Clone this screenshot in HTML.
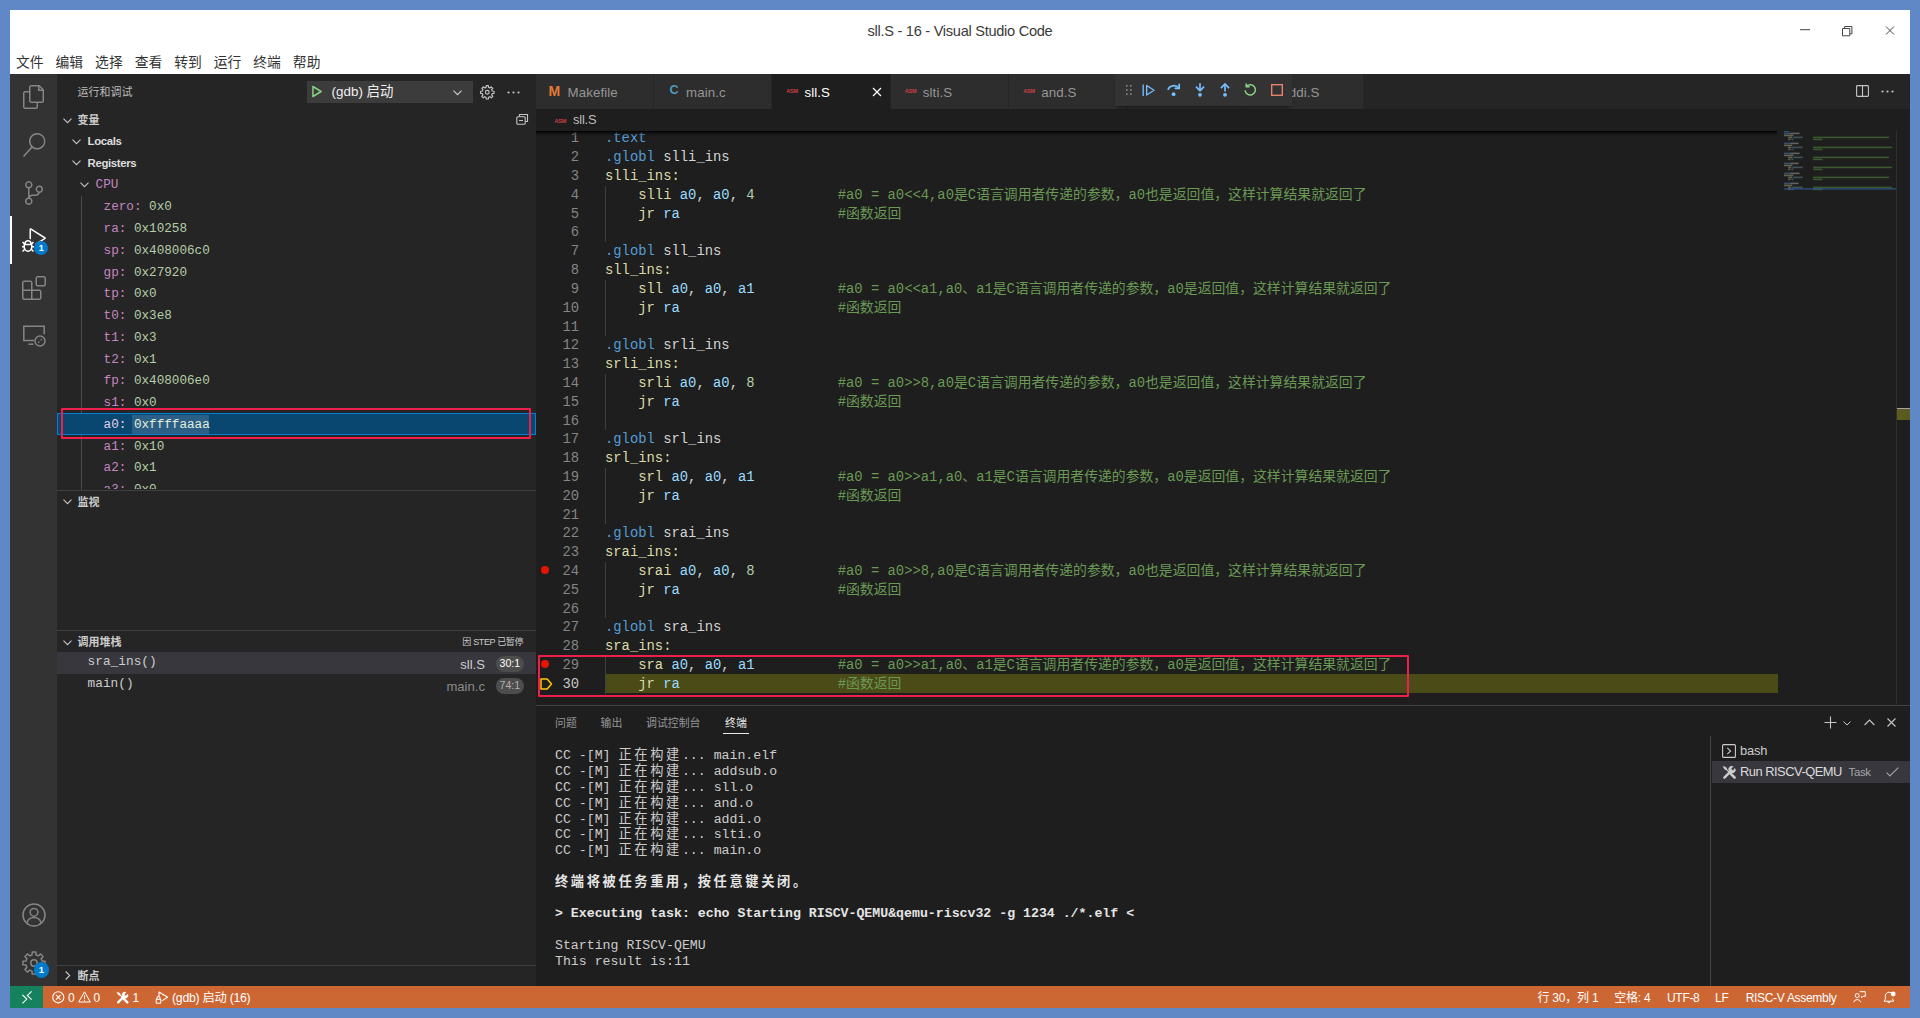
<!DOCTYPE html><html lang="zh-CN"><head><meta charset="utf-8"><title>sll.S - 16 - Visual Studio Code</title><style>
*{box-sizing:border-box;margin:0;padding:0}
html,body{width:1920px;height:1018px;overflow:hidden}
body{background:#6087c6;font-family:"Liberation Sans","Noto Sans CJK SC",sans-serif;font-size:13px;color:#ccc;position:relative}
.abs{position:absolute}
#win{position:absolute;left:10px;top:10px;width:1900px;height:998px;background:#1e1e1e;overflow:hidden}
#title{position:absolute;left:0;top:0;width:1900px;height:63.5px;background:#fff;color:#333}
#title .t{position:absolute;left:0;width:1900px;top:11.6px;text-align:center;font-size:14.6px;line-height:18px;color:#3a3a3a;letter-spacing:-0.28px}
#menu span{position:absolute;top:44.3px;font-size:13.8px;line-height:18px;color:#333;white-space:nowrap}
#act{position:absolute;left:0;top:63.5px;width:47.4px;height:912.5px;background:#333}
#side{position:absolute;left:47.4px;top:63.5px;width:478.6px;height:912.5px;background:#252526}
#ed{position:absolute;left:526px;top:63.5px;width:1374px;height:912.5px;background:#1e1e1e}
#status{position:absolute;left:0;top:976px;width:1900px;height:22px;background:#cc6633;color:#fff;font-size:12px}
.mono{font-family:"Liberation Mono","Noto Sans CJK SC",monospace}
.row{position:absolute;left:0;width:478.5px;height:21.75px;line-height:21.75px;white-space:nowrap}
.hdr{font-weight:bold;font-size:11px;color:#ccc}
.k{color:#c586c0} .v{color:#b5cea8}
.tab{position:absolute;top:0;height:34.6px;background:#2d2d2d;color:#969696;font-size:13px;line-height:34.6px;white-space:nowrap}
.tab.on{background:#1e1e1e;color:#fff}
.ln{position:absolute;left:0;width:53px;text-align:right;color:#858585;height:18.805px;line-height:18.805px;font-size:13.85px}
.cl{position:absolute;left:69px;height:18.805px;line-height:18.805px;font-size:13.85px;white-space:pre;color:#d4d4d4}
.d{color:#569cd6} .p{color:#d4d4d4} .f{color:#dcdcaa} .r{color:#9cdcfe} .n{color:#b5cea8} .c{color:#6a9955}
.tl{position:absolute;left:29px;height:15.83px;line-height:15.83px;font-size:13.22px;white-space:pre;color:#ccc}
.w{letter-spacing:2.64px}
svg{position:absolute;overflow:visible}
</style></head><body>
<div id="win">
<div id="title"><div class="t">sll.S - 16 - Visual Studio Code</div>
<div id="menu">
<span style="left:6.00px">文件</span>
<span style="left:45.55px">编辑</span>
<span style="left:85.10px">选择</span>
<span style="left:124.65px">查看</span>
<span style="left:164.20px">转到</span>
<span style="left:203.75px">运行</span>
<span style="left:243.30px">终端</span>
<span style="left:282.85px">帮助</span>
</div>
<svg style="left:1789.4px;top:13.5px" width="100" height="14" viewBox="0 0 100 14" fill="none" stroke="#444" stroke-width="1"><path d="M1 5.7h10"/><path d="M43.5 4.5h7.3v7.3h-7.3z"/><path d="M45.6 4.5v-2h7.3v7.3h-2.1"/><path d="M87 2.5l8 8M95 2.5l-8 8"/></svg>
</div>
<div id="act">
<div class="abs" style="left:0;top:142.5px;width:2px;height:47.5px;background:#fff"></div>
<svg style="left:12px;top:11.5px" width="24" height="24" viewBox="0 0 24 24" fill="#858585"><path d="M17.5 0h-9L7 1.5V6H2.5L1 7.5v15.07L2.5 24h12.07L16 22.57V18h4.7l1.3-1.43V4.5L17.5 0zm0 2.12l2.38 2.38H17.5V2.12zm-3 20.38h-12v-15H7v9.07L8.5 18h6v4.5zm6-6h-12v-15H16V6h4.5v10.5z"/></svg>
<svg style="left:12px;top:59.5px" width="24" height="24" viewBox="0 0 24 24" fill="#858585"><path d="M15.25 0a8.25 8.25 0 0 0-6.18 13.72L1 22.88l1.12 1.12 8.05-9.12A8.251 8.251 0 1 0 15.25.01V0zm0 15a6.75 6.75 0 1 1 0-13.5 6.75 6.75 0 0 1 0 13.5z"/></svg>
<svg style="left:12px;top:107.0px" width="24" height="24" viewBox="0 0 24 24" fill="#858585"><path d="M21.007 8.222A3.738 3.738 0 0 0 15.045 5.2a3.737 3.737 0 0 0 1.156 6.583 2.988 2.988 0 0 1-2.668 1.67h-2.99a4.456 4.456 0 0 0-2.989 1.165V7.4a3.737 3.737 0 1 0-1.494 0v9.117a3.776 3.776 0 1 0 1.816.099 2.99 2.99 0 0 1 2.668-1.667h2.99a4.484 4.484 0 0 0 4.223-3.039 3.736 3.736 0 0 0 3.25-3.687zM4.565 3.738a2.242 2.242 0 1 1 4.484 0 2.242 2.242 0 0 1-4.484 0zm4.484 16.441a2.242 2.242 0 1 1-4.484 0 2.242 2.242 0 0 1 4.484 0zm8.221-9.715a2.242 2.242 0 1 1 0-4.485 2.242 2.242 0 0 1 0 4.485z"/></svg>
<svg style="left:12px;top:154.8px" width="24" height="24" viewBox="0 0 24 24" fill="#fff"><path d="M10.94 13.5l-1.32 1.32a3.73 3.73 0 0 0-7.24 0L1.06 13.5 0 14.56l1.72 1.72-.22.22V18H0v1.5h1.5v.08c.077.489.214.966.41 1.42L0 22.94 1.06 24l1.65-1.65A4.308 4.308 0 0 0 6 24a4.31 4.31 0 0 0 3.29-1.65L10.94 24 12 22.94 10.09 21c.198-.464.336-.951.41-1.45v-.1H12V18h-1.5v-1.5l-.22-.22L12 14.56l-1.06-1.06zM6 13.5a2.25 2.25 0 0 1 2.25 2.25h-4.5A2.25 2.25 0 0 1 6 13.5zm3 6a3.33 3.33 0 0 1-3 3 3.33 3.33 0 0 1-3-3v-2.25h6v2.25zm14.76-9.9v1.26L13.5 17.37V15.6l8.5-5.37L9 2v9.46a5.07 5.07 0 0 0-1.5-.72V.63L8.64 0l15.12 9.6z"/></svg>
<svg style="left:12px;top:202.5px" width="24" height="24" viewBox="0 0 24 24" fill="#858585"><path d="M13.5 1.5L15 0h7.5L24 1.5V9l-1.5 1.5H15L13.5 9V1.5zm1.5 0V9h7.5V1.5H15zM0 15V6l1.5-1.5H9L10.5 6v7.5H18l1.5 1.5v7.5L18 24H1.5L0 22.5V15zm9-1.5V6H1.5v7.5H9zM9 15H1.5v7.5H9V15zm1.5 7.5H18V15h-7.5v7.5z"/></svg>
<svg style="left:12px;top:249.5px" width="24" height="24" viewBox="0 0 24 24" fill="none" stroke="#858585" stroke-width="1.5"><path d="M12 17.5H1.8V3.2h20.4v8"/><path d="M6.5 21.2h5"/><circle cx="18" cy="18" r="5"/><path d="M16.2 19.8l1.3-1.3M18.6 17.4l1.3-1.3" stroke-width="1.2"/></svg>
<svg style="left:12px;top:829.5px" width="24" height="24" viewBox="0 0 24 24" fill="none" stroke="#858585" stroke-width="1.5"><circle cx="12" cy="12" r="11"/><circle cx="12" cy="9.3" r="3.9"/><path d="M4.9 20.2a7.3 7.3 0 0 1 14.2 0"/></svg>
<svg style="left:12px;top:877.2px" width="24" height="24" viewBox="0 0 24 24" fill="none" stroke="#858585" stroke-width="1.5" stroke-linejoin="round"><path d="M9.94 3.96L10.25 0.94L13.75 0.94L14.06 3.96A8.3 8.3 0 0 1 16.23 4.86L18.58 2.94L21.06 5.42L19.14 7.77A8.3 8.3 0 0 1 20.04 9.94L23.06 10.25L23.06 13.75L20.04 14.06A8.3 8.3 0 0 1 19.14 16.23L21.06 18.58L18.58 21.06L16.23 19.14A8.3 8.3 0 0 1 14.06 20.04L13.75 23.06L10.25 23.06L9.94 20.04A8.3 8.3 0 0 1 7.77 19.14L5.42 21.06L2.94 18.58L4.86 16.23A8.3 8.3 0 0 1 3.96 14.06L0.94 13.75L0.94 10.25L3.96 9.94A8.3 8.3 0 0 1 4.86 7.77L2.94 5.42L5.42 2.94L7.77 4.86A8.3 8.3 0 0 1 9.94 3.96Z"/><circle cx="12" cy="12" r="3.2"/></svg>
<div class="abs" style="left:24.3px;top:167.6px;width:14px;height:14px;border-radius:50%;background:#007acc;color:#fff;font-size:9px;font-weight:bold;line-height:14px;text-align:center">1</div>
<div class="abs" style="left:23.6px;top:888.8px;width:15.6px;height:15.6px;border-radius:50%;background:#007acc;color:#fff;font-size:9.5px;font-weight:bold;line-height:15.6px;text-align:center">1</div>
</div>
<div id="side">
<div class="abs" style="left:20.200000000000003px;top:9.5px;font-size:11px;line-height:18px;color:#bbb;white-space:nowrap">运行和调试</div>
<div class="abs" style="left:250.0px;top:7.6px;width:165.2px;height:21.8px;background:#3c3c3c"></div>
<svg style="left:255.0px;top:11.8px" width="10.4" height="13" viewBox="0 0 11 13" fill="none" stroke="#89d185" stroke-width="1.6" stroke-linejoin="round"><path d="M1 1.2l8.6 5.3L1 11.8z"/></svg>
<div class="abs" style="left:274.20000000000005px;top:8.9px;font-size:13.4px;line-height:20px;color:#f0f0f0;white-space:nowrap">(gdb) 启动</div>
<svg style="left:395.7px;top:16.2px" width="9" height="6" viewBox="0 0 9 6" fill="none" stroke="#ccc" stroke-width="1.1"><path d="M0.5 0.7l4 4 4-4"/></svg>
<svg style="left:422.80000000000007px;top:11.0px" width="14.6" height="14.6" viewBox="0 0 24 24" fill="none" stroke="#c5c5c5" stroke-width="1.9" stroke-linejoin="round"><path d="M9.94 3.96L10.25 0.94L13.75 0.94L14.06 3.96A8.3 8.3 0 0 1 16.23 4.86L18.58 2.94L21.06 5.42L19.14 7.77A8.3 8.3 0 0 1 20.04 9.94L23.06 10.25L23.06 13.75L20.04 14.06A8.3 8.3 0 0 1 19.14 16.23L21.06 18.58L18.58 21.06L16.23 19.14A8.3 8.3 0 0 1 14.06 20.04L13.75 23.06L10.25 23.06L9.94 20.04A8.3 8.3 0 0 1 7.77 19.14L5.42 21.06L2.94 18.58L4.86 16.23A8.3 8.3 0 0 1 3.96 14.06L0.94 13.75L0.94 10.25L3.96 9.94A8.3 8.3 0 0 1 4.86 7.77L2.94 5.42L5.42 2.94L7.77 4.86A8.3 8.3 0 0 1 9.94 3.96Z"/><circle cx="12" cy="12" r="3.1"/></svg>
<svg style="left:449.20000000000005px;top:17.5px" width="13" height="3" viewBox="0 0 13 3" fill="#c5c5c5"><circle cx="1.5" cy="1.5" r="1.1"/><circle cx="6.5" cy="1.5" r="1.1"/><circle cx="11.5" cy="1.5" r="1.1"/></svg>
<svg style="left:5.7px;top:44.0px" width="9" height="6" viewBox="0 0 9 6" fill="none" stroke="#c5c5c5" stroke-width="1.1"><path d="M0.5 0.7l4 4 4-4"/></svg>
<div class="abs hdr" style="left:20.200000000000003px;top:36.3px;line-height:20px;white-space:nowrap">变量</div>
<svg style="left:458.20000000000005px;top:39.5px" width="13" height="13" viewBox="0 0 13 13" fill="none" stroke="#c5c5c5" stroke-width="1.1"><path d="M3.5 3.5V1.5h8v7h-2"/><rect x="0.8" y="3.8" width="8.4" height="7.4" rx="1"/><path d="M3 7.5h4"/></svg>
<svg style="left:14.7px;top:65.2px" width="9" height="6" viewBox="0 0 9 6" fill="none" stroke="#c5c5c5" stroke-width="1.1"><path d="M0.5 0.7l4 4 4-4"/></svg>
<div class="abs" style="left:30.200000000000003px;top:57.5px;line-height:20px;font-size:11.4px;letter-spacing:-0.35px;font-weight:bold;color:#ddd;white-space:nowrap">Locals</div>
<svg style="left:14.7px;top:86.7px" width="9" height="6" viewBox="0 0 9 6" fill="none" stroke="#c5c5c5" stroke-width="1.1"><path d="M0.5 0.7l4 4 4-4"/></svg>
<div class="abs" style="left:30.200000000000003px;top:79.0px;line-height:20px;font-size:11.4px;letter-spacing:-0.35px;font-weight:bold;color:#ddd;white-space:nowrap">Registers</div>
<svg style="left:22.7px;top:108.7px" width="9" height="6" viewBox="0 0 9 6" fill="none" stroke="#c5c5c5" stroke-width="1.1"><path d="M0.5 0.7l4 4 4-4"/></svg>
<div class="abs mono k" style="left:38.2px;top:101.5px;line-height:20px;font-size:12.65px;white-space:nowrap">CPU</div>
<div class="abs" style="left:23.60000000000001px;top:122.0px;width:1px;height:294px;background:#4a4a4a"></div>
<div class="abs" style="left:0;top:339.3px;width:478.5px;height:22.5px;background:#094771;border:1px solid #007fd4"></div>
<div class="abs" style="left:74.69999999999999px;top:341.5px;width:77px;height:19px;background:#2b5f86"></div>
<div class="abs" style="left:0;top:0;width:478.5px;height:415.8px;overflow:hidden">
<div class="row mono" style="left:46.2px;top:122.90px;font-size:12.65px"><span class="k">zero:</span> <span class="v">0x0</span></div>
<div class="row mono" style="left:46.2px;top:144.65px;font-size:12.65px"><span class="k">ra:</span> <span class="v">0x10258</span></div>
<div class="row mono" style="left:46.2px;top:166.40px;font-size:12.65px"><span class="k">sp:</span> <span class="v">0x408006c0</span></div>
<div class="row mono" style="left:46.2px;top:188.15px;font-size:12.65px"><span class="k">gp:</span> <span class="v">0x27920</span></div>
<div class="row mono" style="left:46.2px;top:209.90px;font-size:12.65px"><span class="k">tp:</span> <span class="v">0x0</span></div>
<div class="row mono" style="left:46.2px;top:231.65px;font-size:12.65px"><span class="k">t0:</span> <span class="v">0x3e8</span></div>
<div class="row mono" style="left:46.2px;top:253.40px;font-size:12.65px"><span class="k">t1:</span> <span class="v">0x3</span></div>
<div class="row mono" style="left:46.2px;top:275.15px;font-size:12.65px"><span class="k">t2:</span> <span class="v">0x1</span></div>
<div class="row mono" style="left:46.2px;top:296.90px;font-size:12.65px"><span class="k">fp:</span> <span class="v">0x408006e0</span></div>
<div class="row mono" style="left:46.2px;top:318.65px;font-size:12.65px"><span class="k">s1:</span> <span class="v">0x0</span></div>
<div class="row mono" style="left:46.2px;top:340.40px;font-size:12.65px"><span class="k" style="color:#e8d0e8">a0:</span> <span class="v" style="color:#e4eedc">0xffffaaaa</span></div>
<div class="row mono" style="left:46.2px;top:362.15px;font-size:12.65px"><span class="k">a1:</span> <span class="v">0x10</span></div>
<div class="row mono" style="left:46.2px;top:383.90px;font-size:12.65px"><span class="k">a2:</span> <span class="v">0x1</span></div>
<div class="row mono" style="left:46.2px;top:405.65px;font-size:12.65px"><span class="k">a3:</span> <span class="v">0x0</span></div>
</div>
<div class="abs" style="left:3.8px;top:334.8px;width:469.7px;height:30.5px;border:2px solid #ee1f4b;border-radius:1px"></div>
<div class="abs" style="left:0;top:416.5px;width:478.5px;height:1px;background:#3f3f41"></div>
<svg style="left:5.7px;top:425.8px" width="9" height="6" viewBox="0 0 9 6" fill="none" stroke="#c5c5c5" stroke-width="1.1"><path d="M0.5 0.7l4 4 4-4"/></svg>
<div class="abs hdr" style="left:20.200000000000003px;top:418.1px;line-height:20px;white-space:nowrap">监视</div>
<div class="abs" style="left:0;top:556.5px;width:478.5px;height:1px;background:#3f3f41"></div>
<svg style="left:5.7px;top:566.2px" width="9" height="6" viewBox="0 0 9 6" fill="none" stroke="#c5c5c5" stroke-width="1.1"><path d="M0.5 0.7l4 4 4-4"/></svg>
<div class="abs hdr" style="left:20.200000000000003px;top:558.5px;line-height:20px;white-space:nowrap">调用堆栈</div>
<div class="abs" style="right:12.8px;top:558.5px;line-height:20px;font-size:9.0px;letter-spacing:-0.35px;color:#ccc;white-space:nowrap">因 STEP 已暂停</div>
<div class="abs" style="left:0;top:578.5px;width:478.5px;height:21.75px;background:#37373d"></div>
<div class="abs mono" style="left:30.200000000000003px;top:578.9px;line-height:20px;font-size:12.8px;color:#ccc;white-space:nowrap">sra_ins()</div>
<div class="abs" style="right:51.0px;top:581.1px;line-height:20px;font-size:13.1px;color:#ccc;white-space:nowrap">sll.S</div>
<div class="abs" style="left:438.20000000000005px;top:582.6px;width:28.6px;height:15.5px;border-radius:8px;background:#4d4d4d;color:#fff;font-size:10.6px;line-height:15.5px;text-align:center;white-space:nowrap">30:1</div>
<div class="abs mono" style="left:30.200000000000003px;top:600.9px;line-height:20px;font-size:12.8px;color:#ccc;white-space:nowrap">main()</div>
<div class="abs" style="right:51.0px;top:603.1px;line-height:20px;font-size:13.1px;color:#8b8b8b;white-space:nowrap">main.c</div>
<div class="abs" style="left:438.20000000000005px;top:604.6px;width:28.6px;height:15.5px;border-radius:8px;background:#4d4d4d;color:#b0b0b0;font-size:10.6px;line-height:15.5px;text-align:center;white-space:nowrap">74:1</div>
<div class="abs" style="left:0;top:891.5px;width:478.5px;height:1px;background:#3f3f41"></div>
<svg style="left:7.9px;top:897.5px" width="6" height="9" viewBox="0 0 6 9" fill="none" stroke="#c5c5c5" stroke-width="1.1"><path d="M0.7 0.5l4 4-4 4"/></svg>
<div class="abs hdr" style="left:20.200000000000003px;top:892.0px;line-height:20px;white-space:nowrap">断点</div>
</div>
<div id="ed">
<div class="abs" style="left:0;top:0;width:1374px;height:35.2px;background:#252526"></div>
<div class="tab" style="left:-0.50px;width:117.42px;top:0.7px">
<span class="abs" style="left:13px;top:-0.5px;font-weight:bold;font-size:14px;color:#e37933">M</span>
<span class="abs" style="left:32.1px;top:1.7px;font-size:13.3px;letter-spacing:0.08px">Makefile</span>
</div>
<div class="tab" style="left:117.92px;width:117.42px;top:0.7px">
<span class="abs" style="left:15.5px;top:-1px;font-weight:bold;font-size:12.6px;color:#519aba">C</span>
<span class="abs" style="left:32.1px;top:1.7px;font-size:13.3px;letter-spacing:0.08px">main.c</span>
</div>
<div class="tab on" style="left:236.34px;width:117.42px;top:0.7px">
<span class="abs" style="left:14px;top:13px;width:14px;height:8px;line-height:8px;font-size:5.5px;font-weight:bold;color:#cc3e44;letter-spacing:-0.2px;overflow:hidden">ASM</span>
<span class="abs" style="left:32.1px;top:1.7px;font-size:13.3px;letter-spacing:0.08px">sll.S</span>
<svg style="left:99.5px;top:12.5px" width="10" height="10" viewBox="0 0 10 10" fill="none" stroke="#fff" stroke-width="1.2"><path d="M1 1l8 8M9 1l-8 8"/></svg>
</div>
<div class="tab" style="left:354.76px;width:117.42px;top:0.7px">
<span class="abs" style="left:14px;top:13px;width:14px;height:8px;line-height:8px;font-size:5.5px;font-weight:bold;color:#cc3e44;letter-spacing:-0.2px;overflow:hidden">ASM</span>
<span class="abs" style="left:32.1px;top:1.7px;font-size:13.3px;letter-spacing:0.08px">slti.S</span>
</div>
<div class="tab" style="left:473.18px;width:117.42px;top:0.7px">
<span class="abs" style="left:14px;top:13px;width:14px;height:8px;line-height:8px;font-size:5.5px;font-weight:bold;color:#cc3e44;letter-spacing:-0.2px;overflow:hidden">ASM</span>
<span class="abs" style="left:32.1px;top:1.7px;font-size:13.3px;letter-spacing:0.08px">and.S</span>
</div>
<div class="tab" style="left:591.60px;width:117.42px;top:0.7px">
</div>
<div class="tab" style="left:710.02px;width:117.42px;top:0.7px">
<span class="abs" style="left:14px;top:13px;width:14px;height:8px;line-height:8px;font-size:5.5px;font-weight:bold;color:#cc3e44;letter-spacing:-0.2px;overflow:hidden">ASM</span>
<span class="abs" style="left:35.2px;top:1.7px;font-size:13.3px;letter-spacing:0.08px">addi.S</span>
</div>
<svg style="left:1319.5px;top:11.5px" width="13" height="12" viewBox="0 0 13 12" fill="none" stroke="#c5c5c5" stroke-width="1.1"><rect x="0.6" y="0.6" width="11.8" height="10.8" rx="0.8"/><path d="M6.5 0.6v10.8"/></svg>
<svg style="left:1345.0px;top:16.5px" width="13" height="3" viewBox="0 0 13 3" fill="#c5c5c5"><circle cx="1.5" cy="1.5" r="1.1"/><circle cx="6.5" cy="1.5" r="1.1"/><circle cx="11.5" cy="1.5" r="1.1"/></svg>
<div class="abs" style="left:579.0px;top:0.5px;width:177px;height:31.5px;background:#333;box-shadow:0 3px 4px -2px rgba(0,0,0,.6)"></div>
<svg style="left:590.0px;top:11.5px" width="6" height="11" viewBox="0 0 6 11" fill="#8a8a8a"><rect x="0" y="0" width="1.6" height="1.6"/><rect x="4" y="0" width="1.6" height="1.6"/><rect x="0" y="4.2" width="1.6" height="1.6"/><rect x="4" y="4.2" width="1.6" height="1.6"/><rect x="0" y="8.4" width="1.6" height="1.6"/><rect x="4" y="8.4" width="1.6" height="1.6"/></svg>
<svg style="left:605.5px;top:10.0px" width="14" height="12.6" viewBox="0 0 14 13" fill="none" stroke="#75beff" stroke-width="1.4" stroke-linejoin="round"><path d="M1 0.5v12"/><path d="M4.6 1.6l7.6 4.9-7.6 4.9z"/></svg>
<svg style="left:631.3px;top:9.1px" width="14" height="14" viewBox="0 0 14 14" fill="none" stroke="#75beff" stroke-width="1.7"><path d="M1.2 7a5.6 4.6 0 0 1 10.4-2"/><path d="M12.2 0.8v4.6H7.6"/><circle cx="6.6" cy="11.2" r="1.9" fill="#75beff" stroke="none"/></svg>
<svg style="left:657.5px;top:9.5px" width="12" height="15" viewBox="0 0 12 15" fill="none" stroke="#75beff" stroke-width="1.7"><path d="M6 0.3v7"/><path d="M1.9 3.6L6 7.7l4.1-4.1"/><circle cx="6" cy="11.8" r="1.9" fill="#75beff" stroke="none"/></svg>
<svg style="left:683.0px;top:9.5px" width="12" height="15" viewBox="0 0 12 15" fill="none" stroke="#75beff" stroke-width="1.7"><path d="M6 8.4V1.2"/><path d="M1.9 5.1L6 1l4.1 4.1"/><circle cx="6" cy="11.8" r="1.9" fill="#75beff" stroke="none"/></svg>
<svg style="left:707.7px;top:9.8px" width="12.5" height="13.4" viewBox="0 0 13 14" fill="none" stroke="#89d185" stroke-width="1.6"><path d="M2.6 3.4A5.4 5.4 0 1 1 1.1 7.6"/><path d="M2.3 0.4v3.6h3.6"/></svg>
<svg style="left:734.8px;top:10.2px" width="12" height="12" viewBox="0 0 12 12" fill="none" stroke="#f48771" stroke-width="1.3"><rect x="0.7" y="0.7" width="10.6" height="10.6"/></svg>
<div class="abs" style="left:18.5px;top:43.0px;width:14px;height:8px;line-height:8px;font-size:5.5px;font-weight:bold;color:#cc3e44;letter-spacing:-0.2px;white-space:nowrap;overflow:hidden">ASM</div>
<div class="abs" style="left:37.0px;top:36.5px;line-height:20px;font-size:12.9px;letter-spacing:-0.2px;color:#bdbdbd;white-space:nowrap">sll.S</div>
<div class="abs mono" style="left:0;top:57.5px;width:1374px;height:573.0px;overflow:hidden">
<div class="abs" style="left:69px;top:543.4px;width:1172.5px;height:18.2px;background:#4b4b18"></div>
<div class="ln" style="top:-1.55px;left:-10px;color:#858585">1</div>
<div class="cl" style="top:-1.55px"><span class="d">.text</span></div>
<div class="ln" style="top:17.25px;left:-10px;color:#858585">2</div>
<div class="cl" style="top:17.25px"><span class="d">.globl</span><span class="p"> slli_ins</span></div>
<div class="ln" style="top:36.06px;left:-10px;color:#858585">3</div>
<div class="cl" style="top:36.06px"><span class="f">slli_ins:</span></div>
<div class="ln" style="top:54.86px;left:-10px;color:#858585">4</div>
<div class="cl" style="top:54.86px">    <span class="f">slli</span> <span class="r">a0</span>, <span class="r">a0</span>, <span class="n">4</span>          <span class="c">#a0 = a0&lt;&lt;4,a0是C语言调用者传递的参数，a0也是返回值，这样计算结果就返回了</span></div>
<div class="ln" style="top:73.67px;left:-10px;color:#858585">5</div>
<div class="cl" style="top:73.67px">    <span class="f">jr</span> <span class="r">ra</span>                   <span class="c">#函数返回</span></div>
<div class="ln" style="top:92.47px;left:-10px;color:#858585">6</div>
<div class="ln" style="top:111.28px;left:-10px;color:#858585">7</div>
<div class="cl" style="top:111.28px"><span class="d">.globl</span><span class="p"> sll_ins</span></div>
<div class="ln" style="top:130.08px;left:-10px;color:#858585">8</div>
<div class="cl" style="top:130.08px"><span class="f">sll_ins:</span></div>
<div class="ln" style="top:148.89px;left:-10px;color:#858585">9</div>
<div class="cl" style="top:148.89px">    <span class="f">sll</span> <span class="r">a0</span>, <span class="r">a0</span>, <span class="r">a1</span>          <span class="c">#a0 = a0&lt;&lt;a1,a0、a1是C语言调用者传递的参数，a0是返回值，这样计算结果就返回了</span></div>
<div class="ln" style="top:167.69px;left:-10px;color:#858585">10</div>
<div class="cl" style="top:167.69px">    <span class="f">jr</span> <span class="r">ra</span>                   <span class="c">#函数返回</span></div>
<div class="ln" style="top:186.50px;left:-10px;color:#858585">11</div>
<div class="ln" style="top:205.30px;left:-10px;color:#858585">12</div>
<div class="cl" style="top:205.30px"><span class="d">.globl</span><span class="p"> srli_ins</span></div>
<div class="ln" style="top:224.11px;left:-10px;color:#858585">13</div>
<div class="cl" style="top:224.11px"><span class="f">srli_ins:</span></div>
<div class="ln" style="top:242.91px;left:-10px;color:#858585">14</div>
<div class="cl" style="top:242.91px">    <span class="f">srli</span> <span class="r">a0</span>, <span class="r">a0</span>, <span class="n">8</span>          <span class="c">#a0 = a0&gt;&gt;8,a0是C语言调用者传递的参数，a0也是返回值，这样计算结果就返回了</span></div>
<div class="ln" style="top:261.72px;left:-10px;color:#858585">15</div>
<div class="cl" style="top:261.72px">    <span class="f">jr</span> <span class="r">ra</span>                   <span class="c">#函数返回</span></div>
<div class="ln" style="top:280.52px;left:-10px;color:#858585">16</div>
<div class="ln" style="top:299.33px;left:-10px;color:#858585">17</div>
<div class="cl" style="top:299.33px"><span class="d">.globl</span><span class="p"> srl_ins</span></div>
<div class="ln" style="top:318.13px;left:-10px;color:#858585">18</div>
<div class="cl" style="top:318.13px"><span class="f">srl_ins:</span></div>
<div class="ln" style="top:336.94px;left:-10px;color:#858585">19</div>
<div class="cl" style="top:336.94px">    <span class="f">srl</span> <span class="r">a0</span>, <span class="r">a0</span>, <span class="r">a1</span>          <span class="c">#a0 = a0&gt;&gt;a1,a0、a1是C语言调用者传递的参数，a0是返回值，这样计算结果就返回了</span></div>
<div class="ln" style="top:355.74px;left:-10px;color:#858585">20</div>
<div class="cl" style="top:355.74px">    <span class="f">jr</span> <span class="r">ra</span>                   <span class="c">#函数返回</span></div>
<div class="ln" style="top:374.55px;left:-10px;color:#858585">21</div>
<div class="ln" style="top:393.35px;left:-10px;color:#858585">22</div>
<div class="cl" style="top:393.35px"><span class="d">.globl</span><span class="p"> srai_ins</span></div>
<div class="ln" style="top:412.16px;left:-10px;color:#858585">23</div>
<div class="cl" style="top:412.16px"><span class="f">srai_ins:</span></div>
<div class="ln" style="top:430.96px;left:-10px;color:#858585">24</div>
<div class="cl" style="top:430.96px">    <span class="f">srai</span> <span class="r">a0</span>, <span class="r">a0</span>, <span class="n">8</span>          <span class="c">#a0 = a0&gt;&gt;8,a0是C语言调用者传递的参数，a0也是返回值，这样计算结果就返回了</span></div>
<div class="ln" style="top:449.77px;left:-10px;color:#858585">25</div>
<div class="cl" style="top:449.77px">    <span class="f">jr</span> <span class="r">ra</span>                   <span class="c">#函数返回</span></div>
<div class="ln" style="top:468.57px;left:-10px;color:#858585">26</div>
<div class="ln" style="top:487.38px;left:-10px;color:#858585">27</div>
<div class="cl" style="top:487.38px"><span class="d">.globl</span><span class="p"> sra_ins</span></div>
<div class="ln" style="top:506.18px;left:-10px;color:#858585">28</div>
<div class="cl" style="top:506.18px"><span class="f">sra_ins:</span></div>
<div class="ln" style="top:524.99px;left:-10px;color:#858585">29</div>
<div class="cl" style="top:524.99px">    <span class="f">sra</span> <span class="r">a0</span>, <span class="r">a0</span>, <span class="r">a1</span>          <span class="c">#a0 = a0&gt;&gt;a1,a0、a1是C语言调用者传递的参数，a0是返回值，这样计算结果就返回了</span></div>
<div class="ln" style="top:543.79px;left:-10px;color:#c6c6c6">30</div>
<div class="cl" style="top:543.79px">    <span class="f">jr</span> <span class="r">ra</span>                   <span class="c">#函数返回</span></div>
<div class="abs" style="left:69px;top:54.86px;width:1px;height:56.41px;background:#404040"></div>
<div class="abs" style="left:69px;top:148.89px;width:1px;height:56.41px;background:#404040"></div>
<div class="abs" style="left:69px;top:242.91px;width:1px;height:56.41px;background:#404040"></div>
<div class="abs" style="left:69px;top:336.94px;width:1px;height:56.41px;background:#404040"></div>
<div class="abs" style="left:69px;top:430.96px;width:1px;height:56.41px;background:#404040"></div>
<div class="abs" style="left:69px;top:524.99px;width:1px;height:37.61px;background:#404040"></div>
<div class="abs" style="left:5.4px;top:435.46px;width:8px;height:8px;border-radius:50%;background:#e51400"></div>
<div class="abs" style="left:5.4px;top:529.49px;width:8px;height:8px;border-radius:50%;background:#e51400"></div>
<svg style="left:3.5px;top:546.70px" width="13" height="12" viewBox="0 0 13 12" fill="none" stroke="#ffcc00" stroke-width="1.5" stroke-linejoin="round"><path d="M1 1h6.2l4.3 5-4.3 5H1z"/></svg>
<div class="abs" style="left:0;top:0;width:1241px;height:5px;background:linear-gradient(#000 0,rgba(0,0,0,.55) 30%,rgba(0,0,0,0) 100%)"></div>
<svg style="left:1248.3px;top:0" width="112" height="64" viewBox="0 0 112 64"><g opacity=".62"><rect x="0.0" y="-0.4" width="5.2" height="1.6" fill="#3f6f99"/><rect x="0.0" y="1.6" width="6.2" height="1.6" fill="#3f6f99"/><rect x="6.2" y="1.6" width="9.4" height="1.6" fill="#8c8c8c"/><rect x="0.0" y="3.6" width="9.4" height="1.6" fill="#8e8e74"/><rect x="4.2" y="5.6" width="4.2" height="1.6" fill="#8e8e74"/><rect x="9.4" y="5.6" width="9.4" height="1.6" fill="#5f8aa0" opacity=".8"/><rect x="29.1" y="5.6" width="75.9" height="1.6" fill="#4d7a3c"/><rect x="4.2" y="7.6" width="2.1" height="1.6" fill="#8e8e74"/><rect x="7.3" y="7.6" width="2.1" height="1.6" fill="#5f8aa0" opacity=".8"/><rect x="29.1" y="7.6" width="9.4" height="1.6" fill="#4d7a3c"/><rect x="0.0" y="11.6" width="6.2" height="1.6" fill="#3f6f99"/><rect x="6.2" y="11.6" width="8.3" height="1.6" fill="#8c8c8c"/><rect x="0.0" y="13.6" width="8.3" height="1.6" fill="#8e8e74"/><rect x="4.2" y="15.6" width="3.1" height="1.6" fill="#8e8e74"/><rect x="8.3" y="15.6" width="10.4" height="1.6" fill="#5f8aa0" opacity=".8"/><rect x="29.1" y="15.6" width="79.0" height="1.6" fill="#4d7a3c"/><rect x="4.2" y="17.6" width="2.1" height="1.6" fill="#8e8e74"/><rect x="7.3" y="17.6" width="2.1" height="1.6" fill="#5f8aa0" opacity=".8"/><rect x="29.1" y="17.6" width="9.4" height="1.6" fill="#4d7a3c"/><rect x="0.0" y="21.6" width="6.2" height="1.6" fill="#3f6f99"/><rect x="6.2" y="21.6" width="9.4" height="1.6" fill="#8c8c8c"/><rect x="0.0" y="23.6" width="9.4" height="1.6" fill="#8e8e74"/><rect x="4.2" y="25.6" width="4.2" height="1.6" fill="#8e8e74"/><rect x="9.4" y="25.6" width="9.4" height="1.6" fill="#5f8aa0" opacity=".8"/><rect x="29.1" y="25.6" width="75.9" height="1.6" fill="#4d7a3c"/><rect x="4.2" y="27.6" width="2.1" height="1.6" fill="#8e8e74"/><rect x="7.3" y="27.6" width="2.1" height="1.6" fill="#5f8aa0" opacity=".8"/><rect x="29.1" y="27.6" width="9.4" height="1.6" fill="#4d7a3c"/><rect x="0.0" y="31.6" width="6.2" height="1.6" fill="#3f6f99"/><rect x="6.2" y="31.6" width="8.3" height="1.6" fill="#8c8c8c"/><rect x="0.0" y="33.6" width="8.3" height="1.6" fill="#8e8e74"/><rect x="4.2" y="35.6" width="3.1" height="1.6" fill="#8e8e74"/><rect x="8.3" y="35.6" width="10.4" height="1.6" fill="#5f8aa0" opacity=".8"/><rect x="29.1" y="35.6" width="79.0" height="1.6" fill="#4d7a3c"/><rect x="4.2" y="37.6" width="2.1" height="1.6" fill="#8e8e74"/><rect x="7.3" y="37.6" width="2.1" height="1.6" fill="#5f8aa0" opacity=".8"/><rect x="29.1" y="37.6" width="9.4" height="1.6" fill="#4d7a3c"/><rect x="0.0" y="41.6" width="6.2" height="1.6" fill="#3f6f99"/><rect x="6.2" y="41.6" width="9.4" height="1.6" fill="#8c8c8c"/><rect x="0.0" y="43.6" width="9.4" height="1.6" fill="#8e8e74"/><rect x="4.2" y="45.6" width="4.2" height="1.6" fill="#8e8e74"/><rect x="9.4" y="45.6" width="9.4" height="1.6" fill="#5f8aa0" opacity=".8"/><rect x="29.1" y="45.6" width="75.9" height="1.6" fill="#4d7a3c"/><rect x="4.2" y="47.6" width="2.1" height="1.6" fill="#8e8e74"/><rect x="7.3" y="47.6" width="2.1" height="1.6" fill="#5f8aa0" opacity=".8"/><rect x="29.1" y="47.6" width="9.4" height="1.6" fill="#4d7a3c"/><rect x="0.0" y="51.6" width="6.2" height="1.6" fill="#3f6f99"/><rect x="6.2" y="51.6" width="8.3" height="1.6" fill="#8c8c8c"/><rect x="0.0" y="53.6" width="8.3" height="1.6" fill="#8e8e74"/><rect x="4.2" y="55.6" width="3.1" height="1.6" fill="#8e8e74"/><rect x="8.3" y="55.6" width="10.4" height="1.6" fill="#5f8aa0" opacity=".8"/><rect x="29.1" y="55.6" width="79.0" height="1.6" fill="#4d7a3c"/><rect x="4.2" y="57.6" width="2.1" height="1.6" fill="#8e8e74"/><rect x="7.3" y="57.6" width="2.1" height="1.6" fill="#5f8aa0" opacity=".8"/><rect x="29.1" y="57.6" width="9.4" height="1.6" fill="#4d7a3c"/></g><rect x="0" y="57.3" width="112" height="1.2" fill="#2f5f9e" opacity=".85"/></svg>
<div class="abs" style="left:1360.0px;top:0;width:1px;height:573px;background:#2f2f2f"></div>
<div class="abs" style="left:1361.0px;top:277.4px;width:13px;height:11.6px;background:#5b5b1f;border-top:1px solid #a5a5a5"></div>
</div>
<div class="abs" style="left:2.3px;top:581.5px;width:870.5px;height:42.3px;border:2px solid #ee1f4b;border-radius:1px"></div>
<div class="abs" style="left:0;top:631.0px;width:1374px;height:1px;background:#434343"></div>
<div class="abs" style="left:19.0px;top:640.7px;line-height:18px;font-size:10.9px;color:#969696;white-space:nowrap">问题</div>
<div class="abs" style="left:64.5px;top:640.7px;line-height:18px;font-size:10.9px;color:#969696;white-space:nowrap">输出</div>
<div class="abs" style="left:110.0px;top:640.7px;line-height:18px;font-size:10.9px;color:#969696;white-space:nowrap">调试控制台</div>
<div class="abs" style="left:189.0px;top:640.7px;line-height:18px;font-size:10.9px;color:#e7e7e7;white-space:nowrap">终端</div>
<div class="abs" style="left:186.5px;top:659.3px;width:26px;height:1px;background:#e7e7e7"></div>
<svg style="left:1287.5px;top:642.0px" width="13" height="13" viewBox="0 0 13 13" fill="none" stroke="#c5c5c5" stroke-width="1.1"><path d="M6.5 0.5v12M0.5 6.5h12"/></svg>
<svg style="left:1306.5px;top:647.0px" width="8" height="5" viewBox="0 0 8 5" fill="none" stroke="#c5c5c5" stroke-width="1"><path d="M0.5 0.5l3.5 3.5 3.5-3.5"/></svg>
<svg style="left:1328.0px;top:645.5px" width="11" height="7" viewBox="0 0 11 7" fill="none" stroke="#c5c5c5" stroke-width="1.1"><path d="M0.6 6l4.9-5 4.9 5"/></svg>
<svg style="left:1350.5px;top:644.0px" width="9" height="9" viewBox="0 0 9 9" fill="none" stroke="#c5c5c5" stroke-width="1.1"><path d="M0.5 0.5l8 8M8.5 0.5l-8 8"/></svg>
<div class="tl mono" style="left:19.0px;top:674.69px">CC -[M] <span class="w">正在构建</span>... main.elf</div>
<div class="tl mono" style="left:19.0px;top:690.52px">CC -[M] <span class="w">正在构建</span>... addsub.o</div>
<div class="tl mono" style="left:19.0px;top:706.35px">CC -[M] <span class="w">正在构建</span>... sll.o</div>
<div class="tl mono" style="left:19.0px;top:722.18px">CC -[M] <span class="w">正在构建</span>... and.o</div>
<div class="tl mono" style="left:19.0px;top:738.01px">CC -[M] <span class="w">正在构建</span>... addi.o</div>
<div class="tl mono" style="left:19.0px;top:753.84px">CC -[M] <span class="w">正在构建</span>... slti.o</div>
<div class="tl mono" style="left:19.0px;top:769.67px">CC -[M] <span class="w">正在构建</span>... main.o</div>
<div class="tl mono" style="left:19.0px;top:801.33px"><b style="color:#e5e5e5"><span class="w">终端将被任务重用，按任意键关闭。</span></b></div>
<div class="tl mono" style="left:19.0px;top:832.99px"><b style="color:#e5e5e5">&gt; Executing task: echo Starting RISCV-QEMU&amp;qemu-riscv32 -g 1234 ./*.elf &lt;</b></div>
<div class="tl mono" style="left:19.0px;top:864.65px">Starting RISCV-QEMU</div>
<div class="tl mono" style="left:19.0px;top:880.48px">This result is:11</div>
<div class="abs" style="left:1173.8px;top:662.5px;width:1px;height:250px;background:#434343"></div>
<div class="abs" style="left:1175.5px;top:687.7px;width:198.5px;height:21.4px;background:#37373d"></div>
<svg style="left:1186.0px;top:670.5px" width="14" height="14" viewBox="0 0 14 14" fill="none" stroke="#ccc" stroke-width="1.1"><rect x="0.6" y="0.6" width="12.8" height="12.8" rx="1"/><path d="M5.3 3.8L8.6 7l-3.3 3.2"/></svg>
<div class="abs" style="left:1204.0px;top:667.2px;line-height:20px;font-size:12.9px;letter-spacing:-0.2px;color:#ccc;white-space:nowrap">bash</div>
<svg style="left:1185.5px;top:691.5px" width="15" height="15" viewBox="0 0 15 15" fill="none" stroke="#ccc" stroke-linecap="round" stroke-linejoin="round"><path d="M2.4 12.6L8.6 6.4" stroke-width="2.5"/><path d="M8.1 6.9a3 3 0 0 0 4.9-3.4l-1.9 1.9-1.5-0.4-0.4-1.5 1.9-1.9a3 3 0 0 0-3.4 4.9z" fill="#ccc" stroke-width="0.6"/><path d="M12.6 12.6L7.4 7.4" stroke-width="2.7"/><path d="M7.6 7.6L3.4 3.4" stroke-width="1.3"/><path d="M1.4 1.9l1.3 2.4 1.6 0.4 0.4-0.4-0.4-1.6-2.4-1.3z" fill="#ccc" stroke-width="0.6"/></svg>
<div class="abs" style="left:1204.0px;top:688.5px;line-height:20px;font-size:12.9px;letter-spacing:-0.5px;color:#ddd;white-space:nowrap">Run RISCV-QEMU</div>
<div class="abs" style="left:1312.5px;top:688.1px;line-height:20px;font-size:11.4px;letter-spacing:-0.3px;color:#a6a6a6;white-space:nowrap">Task</div>
<svg style="left:1350.0px;top:693.5px" width="13" height="10" viewBox="0 0 13 10" fill="none" stroke="#a0a0a0" stroke-width="1.2"><path d="M0.6 5.6l3.3 3.3L12.3 0.6"/></svg>
</div>
<div id="status"><div class="abs" style="left:0;top:0;width:33.4px;height:22px;background:#16825d"></div>
<svg style="left:12px;top:4.8px" width="10" height="13" viewBox="0 0 10 13" fill="none" stroke="#fff" stroke-width="1.1"><path d="M0.4 3.9l4.4 4.2-4.4 4.2"/><path d="M9.6 0.3L5.3 4.5l4.3 4.2"/></svg>
<svg style="left:41.6px;top:4.7px" width="12.6" height="12.6" viewBox="0 0 12 12" fill="none" stroke="#fff" stroke-width="1"><circle cx="6" cy="6" r="5.3"/><path d="M3.8 3.8l4.4 4.4M8.2 3.8L3.8 8.2"/></svg>
<div class="abs" style="left:58.0px;top:1.9px;line-height:20px;font-size:12px;letter-spacing:-0.25px;color:#fff;white-space:nowrap">0</div>
<svg style="left:68px;top:5px" width="13" height="12" viewBox="0 0 13 12" fill="none" stroke="#fff" stroke-width="1" stroke-linejoin="round"><path d="M6.5 0.8L12.3 11H0.7z"/><path d="M6.5 4.3v3.6M6.5 8.8v1.1"/></svg>
<div class="abs" style="left:83.5px;top:1.9px;line-height:20px;font-size:12px;letter-spacing:-0.25px;color:#fff;white-space:nowrap">0</div>
<svg style="left:105.5px;top:4.5px" width="13.5" height="13.5" viewBox="0 0 15 15" fill="none" stroke="#fff" stroke-linecap="round" stroke-linejoin="round"><path d="M2.4 12.6L8.6 6.4" stroke-width="2.5"/><path d="M8.1 6.9a3 3 0 0 0 4.9-3.4l-1.9 1.9-1.5-0.4-0.4-1.5 1.9-1.9a3 3 0 0 0-3.4 4.9z" fill="#fff" stroke-width="0.6"/><path d="M12.6 12.6L7.4 7.4" stroke-width="2.7"/><path d="M7.6 7.6L3.4 3.4" stroke-width="1.3"/><path d="M1.4 1.9l1.3 2.4 1.6 0.4 0.4-0.4-0.4-1.6-2.4-1.3z" fill="#fff" stroke-width="0.6"/></svg>
<div class="abs" style="left:122.5px;top:1.9px;line-height:20px;font-size:12px;letter-spacing:-0.25px;color:#fff;white-space:nowrap">1</div>
<svg style="left:144.5px;top:4.5px" width="14" height="13" viewBox="0 0 14 13" fill="none" stroke="#fff" stroke-width="1.1" stroke-linejoin="round"><path d="M4 5V1l8.6 5.3-5.4 3.3"/><rect x="1.2" y="8.2" width="4.6" height="4" rx="0.8"/><path d="M2 8.2V7a1.5 1.5 0 0 1 3 0v1.2"/></svg>
<div class="abs" style="left:162.0px;top:1.9px;line-height:20px;font-size:12.25px;letter-spacing:-0.25px;color:#fff;white-space:nowrap">(gdb) 启动 (16)</div>
<div class="abs" style="right:311.5px;top:1.9px;line-height:20px;font-size:12px;letter-spacing:-0.2px;color:#fff;white-space:nowrap">行 30，列 1</div>
<div class="abs" style="right:259.5px;top:1.9px;line-height:20px;font-size:12px;letter-spacing:-0.2px;color:#fff;white-space:nowrap">空格: 4</div>
<div class="abs" style="right:210.5px;top:1.9px;line-height:20px;font-size:12px;letter-spacing:-0.3px;color:#fff;white-space:nowrap">UTF-8</div>
<div class="abs" style="right:181.5px;top:1.9px;line-height:20px;font-size:12px;letter-spacing:-0.3px;color:#fff;white-space:nowrap">LF</div>
<div class="abs" style="right:73.5px;top:1.9px;line-height:20px;font-size:12px;letter-spacing:-0.3px;color:#fff;white-space:nowrap">RISC-V Assembly</div>
<svg style="left:1842.5px;top:5px" width="13" height="12" viewBox="0 0 13 12" fill="none" stroke="#fff" stroke-width="1"><circle cx="4.2" cy="4.6" r="2"/><path d="M0.7 11.3a3.6 3.6 0 0 1 7 0"/><path d="M6.6 0.7h5.7v4.6H10l-1.5 1.5V5.3"/></svg>
<svg style="left:1873px;top:4.5px" width="13" height="13" viewBox="0 0 13 13" fill="none" stroke="#fff" stroke-width="1"><path d="M8 1.6A3.9 3.9 0 0 0 2.3 5.2v3.2L1 10.2h9.6L9.7 8.4V7.6"/><path d="M4.6 10.4a1.3 1.3 0 0 0 2.6 0"/><circle cx="10.2" cy="3" r="2.4" fill="#fff" stroke="none"/></svg>
</div>
</div></body></html>
